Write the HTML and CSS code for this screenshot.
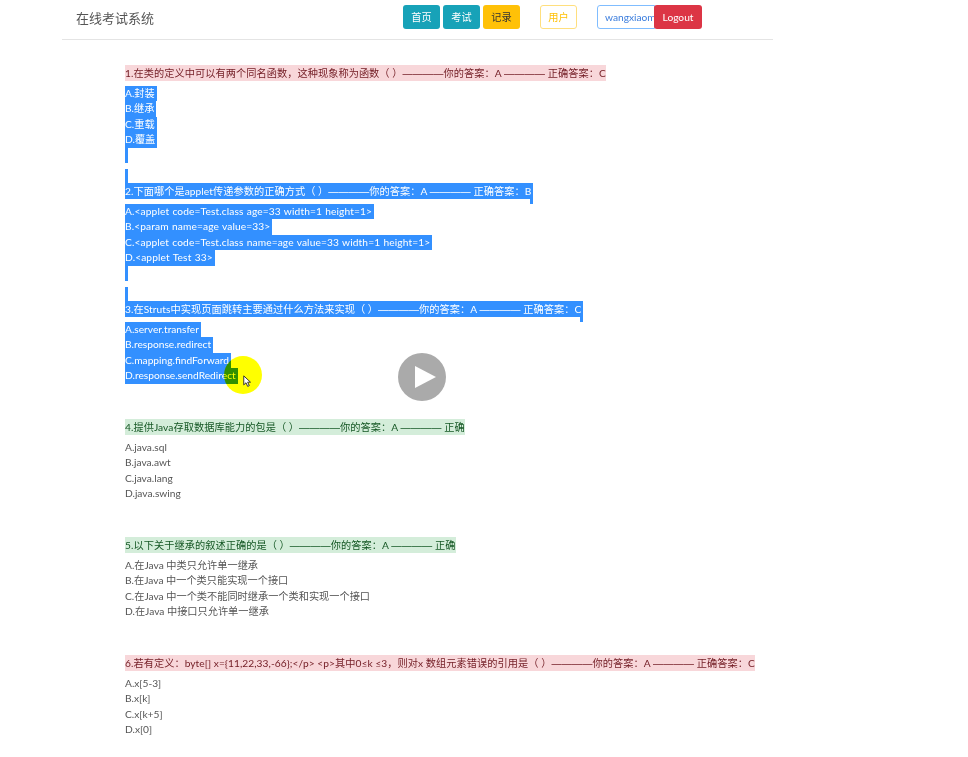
FILE: index.html
```html
<!DOCTYPE html>
<html lang="zh-CN">
<head>
    <meta charset="UTF-8">
    <meta name="viewport" content="width=device-width, initial-scale=1.0">
    <title>在线考试系统</title>
    <link rel="stylesheet" href="styles.css">
</head>
<body>
<div class="page">
    <div class="navbar">
        <span class="brand">在线考试系统</span>
        <div class="nav-btns">
            <a href="javascript:;" class="btn btn-info">首页</a>
            <a href="javascript:;" class="btn btn-info">考试</a>
            <a href="javascript:;" class="btn btn-warning">记录</a>
        </div>
        <a href="javascript:;" class="btn btn-outline">用户</a>
        <div class="login">
            <input class="name" type="text" value="wangxiaoming">
            <a href="javascript:;" class="btn btn-danger">Logout</a>
        </div>
    </div>

    <div class="paper">
        <div class="question selected">
            <p class="title wrong"><span>1.在类的定义中可以有两个同名函数，这种现象称为函数（ ）<i>————</i>你的答案：A <i>————</i> 正确答案：C</span></p>
            <ul class="options">
                <li><span>A.封装</span></li>
                <li><span>B.继承</span></li>
                <li><span>C.重载</span></li>
                <li><span>D.覆盖</span></li>
            </ul>
            <div class="stub"></div>
            <div class="stub second"></div>
        </div>
        <div class="question selected">
            <p class="title wrong end"><span class="tail">2.下面哪个是applet传递参数的正确方式（ ）<i>————</i>你的答案：A <i>————</i> 正确答案：B</span></p>
            <ul class="options code">
                <li><span>A.&lt;applet code=Test.class age=33 width=1 height=1&gt;</span></li>
                <li><span>B.&lt;param name=age value=33&gt;</span></li>
                <li><span>C.&lt;applet code=Test.class name=age value=33 width=1 height=1&gt;</span></li>
                <li><span>D.&lt;applet Test 33&gt;</span></li>
            </ul>
            <div class="stub"></div>
            <div class="stub second"></div>
        </div>
        <div class="question selected">
            <p class="title wrong end"><span class="tail">3.在Struts中实现页面跳转主要通过什么方法来实现（ ）<i>————</i>你的答案：A <i>————</i> 正确答案：C</span></p>
            <ul class="options">
                <li><span>A.server.transfer</span></li>
                <li><span>B.response.redirect</span></li>
                <li><span>C.mapping.findForward</span></li>
                <li><span>D.response.sendRedirect</span></li>
            </ul>
        </div>
        <div class="question">
            <p class="title right"><span>4.提供Java存取数据库能力的包是（ ）<i>————</i>你的答案：A <i>————</i> 正确</span></p>
            <ul class="options">
                <li>A.java.sql</li>
                <li>B.java.awt</li>
                <li>C.java.lang</li>
                <li>D.java.swing</li>
            </ul>
        </div>
        <div class="question">
            <p class="title right"><span>5.以下关于继承的叙述正确的是（ ）<i>————</i>你的答案：A <i>————</i> 正确</span></p>
            <ul class="options">
                <li>A.在Java 中类只允许单一继承</li>
                <li>B.在Java 中一个类只能实现一个接口</li>
                <li>C.在Java 中一个类不能同时继承一个类和实现一个接口</li>
                <li>D.在Java 中接口只允许单一继承</li>
            </ul>
        </div>
        <div class="question">
            <p class="title wrong"><span>6.若有定义：byte[] x={11,22,33,-66};&lt;/p&gt; &lt;p&gt;其中0≤k ≤3，则对x 数组元素错误的引用是（ ）<i>————</i>你的答案：A <i>————</i> 正确答案：C</span></p>
            <ul class="options">
                <li>A.x[5-3]</li>
                <li>B.x[k]</li>
                <li>C.x[k+5]</li>
                <li>D.x[0]</li>
            </ul>
        </div>
    </div>

    <!-- recording overlays -->
    <div class="highlight"></div>
    <svg class="cursor" width="9" height="13" viewBox="0 0 12 17">
        <path d="M1 1v12l3-2.800L6.200 15l2.200-1-2.200-4.600H10z" fill="#fff" stroke="#222" stroke-width="1.200"/>
    </svg>
    <svg class="play" width="48" height="48" viewBox="0 0 48 48">
        <circle cx="24" cy="24" r="24" fill="#aaa"/>
        <path d="M17 13v22l21-11z" fill="#fff"/>
    </svg>
</div>
</body>
</html>
```

FILE: styles.css
```css
*{
    margin: 0;
    padding: 0;
    box-sizing: border-box;
}
body{
    background: #fff;
    color: #555;
    font-family: "Lato", "Noto Sans CJK SC", sans-serif;
    font-size: 10.200px;
}
.page{
    height: 757px;
    overflow: hidden;
    position: relative;
    filter: blur(.3px);
}

/* navbar */
.navbar{
    display: flex;
    align-items: center;
    width: 711px;
    height: 40px;
    margin-left: 62px;
    padding: 0 0 5px 14px;
    border-bottom: 1px solid #e4e4e4;
}
.brand{
    width: 327px;
    font-size: 13px;
    color: #555;
}
.nav-btns{
    display: flex;
    gap: 3px;
    margin-right: 20px;
}
.btn{
    display: block;
    height: 24px;
    line-height: 22px;
    width: 37px;
    text-align: center;
    border: 1px solid transparent;
    border-radius: 3px;
    color: #fff;
    text-decoration: none;
}
.btn-info{
    background: #17a2b8;
}
.btn-warning{
    background: #ffc107;
    color: #333;
}
.btn-outline{
    border-color: #ffdf7e;
    color: #ffc107;
}
.login{
    display: flex;
    margin-left: 20px;
}
.name{
    width: 58px;
    height: 24px;
    padding-left: 7px;
    border: 1px solid #80bdff;
    border-radius: 3px 0 0 3px;
    color: #3b7ddd;
    font: inherit;
    outline: none;
}
.btn-danger{
    width: 48px;
    margin-left: -1px;
    background: #dc3545;
}

/* questions */
.paper{
    padding: 25px 0 0 125px;
}
.question{
    height: 118px;
}
.title{
    position: relative;
    display: table;
    height: 16px;
    line-height: 16px;
    margin-bottom: 5px;
    white-space: nowrap;
    letter-spacing: .06px;
}
.title span{
    display: block;
    height: 16px;
}
.title i{
    font-style: normal;
    font-family: "Liberation Sans", sans-serif;
    line-height: 1;
}
.wrong{
    background: #f8d7da;
    color: #721c24;
}
.right{
    background: #d4edda;
    color: #155724;
}
.options{
    list-style: none;
    line-height: 15.400px;
}
.options li{
    white-space: nowrap;
    height: 15.400px;
}
.code{
    letter-spacing: .12px;
    word-spacing: .5px;
}

/* text the user has dragged over */
.selected .options span,
.selected .title .tail{
    background: #3390ff;
    color: #fff;
}
.selected .options span{
    padding-right: 2px;
    display: inline-block;
    vertical-align: top;
    height: 15.400px;
}
.selected .title .tail{
    padding-right: 2px;
}
.end::after{
    content: "";
    position: absolute;
    right: 0;
    top: 100%;
    width: 3px;
    height: 5px;
    background: #3390ff;
}
.stub{
    width: 3px;
    height: 15px;
    background: #3390ff;
}
.second{
    margin-top: 6px;
}

/* recording overlays */
.highlight{
    position: absolute;
    left: 224px;
    top: 356px;
    width: 38px;
    height: 38px;
    border-radius: 50%;
    background: #ffff00;
    mix-blend-mode: multiply;
}
.cursor{
    position: absolute;
    left: 243px;
    top: 375px;
}
.play{
    position: absolute;
    left: 398px;
    top: 353px;
}
```
